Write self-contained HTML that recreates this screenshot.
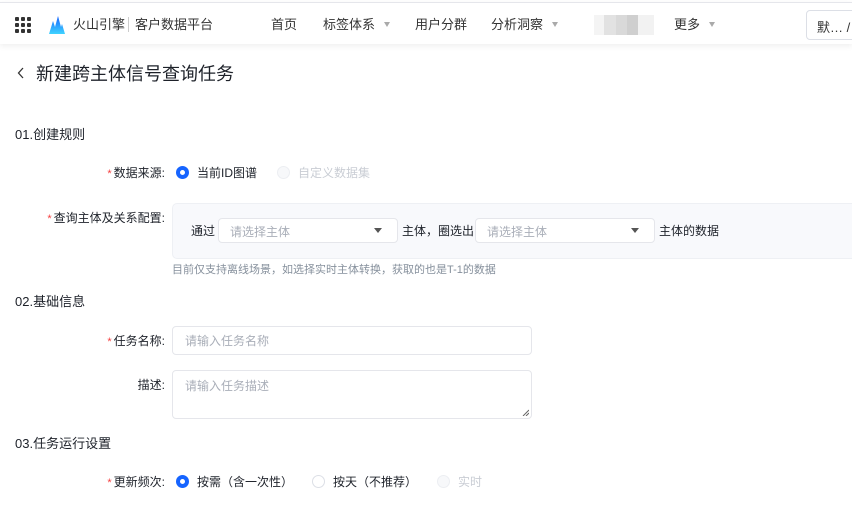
<!DOCTYPE html><html><head><meta charset="utf-8"><style>
*{box-sizing:border-box;margin:0;padding:0}
body{width:852px;height:526px;overflow:hidden;background:#fff;font-family:"Liberation Sans","Noto Sans CJK SC",sans-serif;font-size:12px;color:#1d2129;position:relative}
.a{position:absolute;white-space:nowrap}
.hdr{position:absolute;left:0;top:2px;width:852px;height:42px;background:#fff;border-top:1px solid #e5e6eb;box-shadow:0 2px 6px rgba(0,0,0,.07)}
.dots{position:absolute;left:15px;top:14px;width:16px;height:16px;display:grid;grid-template-columns:repeat(3,4px);gap:2px}
.dots i{width:4px;height:4px;background:#333;border-radius:1px}
.tri{display:inline-block;width:0;height:0;border-left:3.5px solid transparent;border-right:3.5px solid transparent;border-top:5px solid #aaa;margin-left:9px;vertical-align:2px}
.req{color:#f53f3f;font-size:11px;margin-right:2px}
.lab{text-align:right;width:165px;left:0}
.radio{display:inline-block;width:13px;height:13px;border-radius:50%;vertical-align:-2px;margin-right:8px}
.on{border:4px solid #1664ff;background:#fff}
.off{border:1px solid #dcdfe6;background:#fff}
.dis{border:1px solid #eceef2;background:#f7f8fa}
.box{position:absolute;border:1px solid #e5e6eb;border-radius:4px;background:#fff}
.ph{color:#a9aeb8;font-size:12px}
</style></head><body>
<div class="hdr">
<div class="dots"><i></i><i></i><i></i><i></i><i></i><i></i><i></i><i></i><i></i></div>
<svg class="a" style="left:49px;top:12px" width="16" height="20" viewBox="0 0 16 20"><defs><linearGradient id="g" x1="0" y1="0" x2="0" y2="1"><stop offset="0" stop-color="#1664ff"/><stop offset="1" stop-color="#3fd3ff"/></linearGradient></defs><path d="M0 19 L4 6 L6 12 L9 1 L12 12 L13 9 L16 19 Z" fill="url(#g)"/></svg>
<div class="a" style="left:73px;top:11px;font-size:13px;color:#333">火山引擎</div>
<div class="a" style="left:128px;top:14px;width:1px;height:15px;background:#ccc"></div>
<div class="a" style="left:135px;top:11px;font-size:13px;color:#333">客户数据平台</div>
<div class="a" style="left:271px;top:11px;font-size:13px;color:#333">首页</div>
<div class="a" style="left:323px;top:11px;font-size:13px;color:#333">标签体系<span class="tri"></span></div>
<div class="a" style="left:415px;top:11px;font-size:13px;color:#333">用户分群</div>
<div class="a" style="left:491px;top:11px;font-size:13px;color:#333">分析洞察<span class="tri"></span></div>
<div class="a" style="left:594px;top:12px;width:60px;height:20px;background:linear-gradient(90deg,#f4f4f4 0,#f4f4f4 10px,#e2e2e2 10px,#e2e2e2 22px,#d9d9d9 22px,#d9d9d9 33px,#cfcfcf 33px,#cfcfcf 44px,#f2f2f2 44px)"></div>
<div class="a" style="left:674px;top:11px;font-size:13px;color:#333">更多<span class="tri"></span></div>
<div class="a" style="left:806px;top:7px;width:60px;height:30px;border:1px solid #dcdfe6;border-radius:4px;padding:6px 10px;font-size:13px;color:#333">默… /</div>
</div>
<svg class="a" style="left:17px;top:67px" width="8" height="12"><path d="M6 1L1.5 6L6 11" stroke="#333" stroke-width="1.3" fill="none"/></svg>
<div class="a" style="left:36px;top:60px;font-size:18px;color:#1d2129">新建跨主体信号查询任务</div>
<div class="a" style="left:15px;top:124px;font-size:13px">01.创建规则</div>
<div class="a lab" style="top:164px"><span class="req">*</span>数据来源:</div>
<div class="a" style="left:176px;top:164px"><span class="radio on"></span>当前ID图谱</div>
<div class="a" style="left:277px;top:164px;color:#c9cdd4"><span class="radio dis"></span>自定义数据集</div>
<div class="a lab" style="top:209px"><span class="req">*</span>查询主体及关系配置:</div>
<div class="a" style="left:172px;top:203px;width:690px;height:56px;background:#f8f9fc;border:1px solid #eef0f4;border-radius:5px"></div>
<div class="a" style="left:191px;top:222px">通过</div>
<div class="box" style="left:218px;top:218px;width:180px;height:25px"><span class="a ph" style="left:11px;top:4px">请选择主体</span><span class="a" style="left:155px;top:9px;border-left:4px solid transparent;border-right:4px solid transparent;border-top:5px solid #555"></span></div>
<div class="a" style="left:402px;top:222px">主体，圈选出</div>
<div class="box" style="left:475px;top:218px;width:180px;height:25px"><span class="a ph" style="left:11px;top:4px">请选择主体</span><span class="a" style="left:155px;top:9px;border-left:4px solid transparent;border-right:4px solid transparent;border-top:5px solid #555"></span></div>
<div class="a" style="left:659px;top:222px">主体的数据</div>
<div class="a" style="left:172px;top:261px;font-size:11px;color:#86909c">目前仅支持离线场景，如选择实时主体转换，获取的也是T-1的数据</div>
<div class="a" style="left:15px;top:291px;font-size:13px">02.基础信息</div>
<div class="a lab" style="top:332px"><span class="req">*</span>任务名称:</div>
<div class="box" style="left:172px;top:326px;width:360px;height:29px"><span class="a ph" style="left:12px;top:5px">请输入任务名称</span></div>
<div class="a lab" style="top:376px">描述:</div>
<div class="box" style="left:172px;top:370px;width:360px;height:49px"><span class="a ph" style="left:12px;top:6px">请输入任务描述</span><svg class="a" style="right:2px;bottom:2px" width="7" height="7"><path d="M1 7L7 1M4 7L7 4" stroke="#666" stroke-width="1"/></svg></div>
<div class="a" style="left:15px;top:433px;font-size:13px">03.任务运行设置</div>
<div class="a lab" style="top:473px"><span class="req">*</span>更新频次:</div>
<div class="a" style="left:176px;top:473px"><span class="radio on"></span>按需（含一次性）</div>
<div class="a" style="left:312px;top:473px"><span class="radio off"></span>按天（不推荐）</div>
<div class="a" style="left:437px;top:473px;color:#c9cdd4"><span class="radio dis"></span>实时</div>
</body></html>
